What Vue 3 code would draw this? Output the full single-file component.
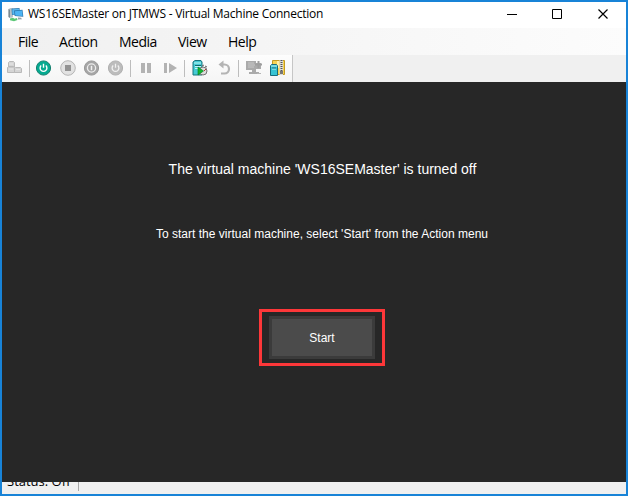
<script setup>
const menus = [
  { label: 'File', cls: 'm-file' },
  { label: 'Action', cls: 'm-action' },
  { label: 'Media', cls: 'm-media' },
  { label: 'View', cls: 'm-view' },
  { label: 'Help', cls: 'm-help' },
]
</script>

<template>
  <div class="window">
    <header class="titlebar">
      <svg class="app-icon" width="16" height="16" viewBox="0 0 16 16">
        <path d="M.5 2l2-1 2.5.5v8.500l-2 1-2.500-1z" fill="#b9c2c7" />
        <path d="M.5 2l1.500.7v8.300l-1.500-1z" fill="#7c8a92" />
        <path d="M3.500 1.500l8-.5.5 6-8 1z" fill="#2f78ac" />
        <path d="M4.300 2.200l6.700-.5.500 5-7 .8z" fill="#57b8f0" />
        <path d="M6 3.500l8.500-.7.8 7-8.600-.8z" fill="#2b74aa" />
        <path d="M6.800 4.200l7.200-.6.600 5.400-7.200-.6z" fill="#4db4f4" />
        <path d="M10 10.500l3 .2 1 1.600-4 .2z" fill="#93a2aa" />
        <path d="M2 11.500l3-.8 1.500 1 2.500-.7.5 2-3.500 1.300-4-1z" fill="#5cc777" />
      </svg>
      <span class="title">WS16SEMaster on JTMWS - Virtual Machine Connection</span>
      <svg class="controls" width="108" height="12" viewBox="0 0 108 12" fill="none" stroke="#000">
        <path d="M0 5.5h10" />
        <path d="M45.5 .5h9v9h-9z" />
        <path d="M91.500 .5l9 9M100.500 .5l-9 9" stroke-width="1.2" />
      </svg>
    </header>

    <nav class="menubar">
      <span v-for="m in menus" :key="m.label" :class="['menu', m.cls]">{{ m.label }}</span>
    </nav>

    <div class="toolbar-row">
      <div class="toolbar">
        <svg class="first" viewBox="0 0 16 16" fill="#d5d5d5" stroke="#b9b9b9">
          <path d="M1.500 2.500l1-1h4l1 1v4.500h-6zM.5 7.500l1-1h5l1 1v5h-7zM7.500 8.500l1-1h5l1 1v4h-7z" />
          <path d="M2 4h4M2 9h4M9 9.500h4" stroke="#e5e5e5" />
        </svg>
        <i class="sep"></i>
        <svg viewBox="0 0 16 16" fill="none">
          <circle cx="7.500" cy="8" r="7.100" fill="#05aa91" stroke="#178271" />
          <path d="M5.200 5.500a3.400 3.400 0 1 0 4.600 0M7.500 3.700v4.100" stroke="#fff" stroke-width="1.4" />
        </svg>
        <svg viewBox="0 0 16 16">
          <circle cx="8" cy="8" r="7.300" fill="#e2e2e2" stroke="#b5b5b5" />
          <path d="M5 5h6v6H5z" fill="#929292" />
        </svg>
        <svg viewBox="0 0 16 16" fill="none">
          <circle cx="7.500" cy="8" r="7.100" fill="#a6a6a6" stroke="#999" />
          <circle cx="7.500" cy="8" r="4.100" stroke="#ededed" stroke-width="1.3" />
          <path d="M7.500 5.800v4.400" stroke="#f2f2f2" stroke-width="1.5" />
        </svg>
        <svg viewBox="0 0 16 16" fill="none">
          <circle cx="7.500" cy="8" r="7.100" fill="#bcbcbc" stroke="#b0b0b0" />
          <path d="M5.200 5.500a3.400 3.400 0 1 0 4.600 0M7.500 3.700v4.100" stroke="#f1f1f1" stroke-width="1.3" />
        </svg>
        <i class="sep"></i>
        <svg viewBox="0 0 16 16" fill="#b3b3b3"><path d="M3 3h4v10H3zM9 3h4v10H9z" /></svg>
        <svg viewBox="0 0 16 16" fill="#b3b3b3"><path d="M2 3h3v10H2zM7 3l8 5-8 5z" /></svg>
        <i class="sep"></i>
        <svg viewBox="0 0 16 16">
          <path d="M1 2l2-1.500h6l1 1.500v13H1z" fill="#45cbd4" stroke="#18747e" />
          <path d="M2 3h7M3 6.500h6M3 8.500h3" stroke="#c3f8f7" />
          <path d="M3 5.500h6" stroke="#17656d" />
          <circle cx="11" cy="11" r="4" fill="#ddd" stroke="#737373" />
          <path d="M10 6l2-1M13 6l2 1" stroke="#666" />
          <path d="M12 11l2-2" stroke="#b23a32" />
          <path d="M6 7v8l5.500-4z" fill="#12b72d" stroke="#087820" stroke-width=".6" />
        </svg>
        <svg viewBox="0 0 16 16">
          <path d="M5 4.500h3.500a4.500 4.500 0 0 1 0 9H5" fill="none" stroke="#b4b4b4" stroke-width="2.200" />
          <path d="M2.500 4.500l5-4v8z" fill="#b4b4b4" />
        </svg>
        <i class="sep"></i>
        <svg viewBox="0 0 16 16">
          <path d="M0 1h10v2h5v6h-5v3h3v2H3v-2h3v-2H0z" fill="#aaa" />
          <path d="M2 3h6M2 5h7M2 7h6" stroke="#c7c7c7" />
          <path d="M12.500 1v7M9 4.500h7" stroke="#9e9e9e" stroke-width="2" />
          <path d="M11 13.500h4" stroke="#b5b5b5" />
        </svg>
        <svg viewBox="0 0 16 16">
          <path d="M2.500.5h12v14h-12z" fill="#f7d453" stroke="#c49b23" />
          <path d="M7 1h2v7H7z" fill="#fff0a9" />
          <path d="M9.500 0h3.500v15h-3.500z" fill="#ddd" />
          <path d="M11.500 0v11" stroke="#555" stroke-width="2" stroke-dasharray="1 1" />
          <path d="M10 11h3v3h-3z" fill="#777" />
          <path d="M.5 6l1-1.500h5l1 1.500v9.500h-7z" fill="#37c4d3" stroke="#176c7c" />
          <path d="M1 6h6M2 9h4" stroke="#b5f4f6" />
          <path d="M2 8h4" stroke="#176c7c" />
        </svg>
      </div>
    </div>

    <main class="screen">
      <h1>The virtual machine 'WS16SEMaster' is turned off</h1>
      <p>To start the virtual machine, select 'Start' from the Action menu</p>
      <div class="highlight"><button>Start</button></div>
    </main>

    <footer class="status"><span>Status: Off</span></footer>
  </div>
</template>

<style>
body { margin: 0; }
</style>

<style scoped>
* { box-sizing: border-box; }
.window {
  width: 628px;
  height: 496px;
  border: 2px solid #1883d7;
  display: flex;
  flex-direction: column;
  background: #f0f0f0;
  color: #000;
  font-family: "Open Sans", "Noto Sans", sans-serif;
  overflow: hidden;
}
.titlebar {
  flex: 0 0 26px;
  display: flex;
  background: #fff;
  padding-left: 6px;
}
.app-icon { margin-top: 5px; flex: none; }
.title {
  flex: none;
  width: 483px;
  padding-left: 4px;
  font-size: 12px;
  line-height: 24px;
  white-space: nowrap;
  letter-spacing: -0.24px;
}
.controls { flex: none; margin-top: 7px; }
.menubar {
  flex: 0 0 27px;
  min-height: 0;
  display: flex;
  padding-left: 16px;
  background: linear-gradient(90deg, #f0f0f0, #fcfcfc);
  font-size: 14px;
  line-height: 28px;
}
.menu { flex: none; white-space: nowrap; letter-spacing: -0.1px; }
.m-file { width: 41px; }
.m-action { width: 60px; letter-spacing: -0.4px; }
.m-media { width: 59px; letter-spacing: -0.5px; }
.m-view { width: 50px; letter-spacing: -0.5px; }
.m-help { letter-spacing: -0.5px; }
.m-file { letter-spacing: -0.5px; }
.toolbar-row { flex: 0 0 27px; display: flex; background: #f0f0f0; }
.toolbar {
  width: 291px;
  display: flex;
  flex: none;
  padding: 5px 0 0 1px;
  background: linear-gradient(#fdfdfd, #f5f5f5);
  border-right: 1px solid #c6c6c6;
}
.toolbar svg { width: 16px; height: 16px; margin: 0 5px 0 3px; flex: none; }
.toolbar svg.first { margin-left: 4px; }
.sep { width: 6px; height: 17px; flex: none; }
.sep::before { content: ""; display: block; width: 1px; height: 17px; margin-left: 1px; background: #bdbdbd; }
.toolbar .first + .sep { width: 5px; }
.screen {
  flex: 0 0 400px;
  display: flex;
  flex-direction: column;
  align-items: center;
  background: #272727;
  color: #fff;
  font-family: "Liberation Sans", sans-serif;
}
h1 {
  margin: 77px 0 0 17px;
  font-size: 14px;
  font-weight: 400;
  line-height: 20px;
  white-space: nowrap;
}
p {
  margin: 46px 0 0 16px;
  font-size: 12px;
  line-height: 18px;
  letter-spacing: 0.01px;
  white-space: nowrap;
}
.highlight {
  width: 126px;
  height: 57px;
  margin: 66px 0 0 16px;
  padding: 4px 7px;
  border: 3px solid #fd3739;
}
button {
  display: block;
  width: 106px;
  height: 43px;
  padding: 0;
  background: #4b4b4b;
  border: 3px solid #3b3b3b;
  color: #fff;
  font: 12px "Liberation Sans", sans-serif;
}
.status {
  flex: 0 0 10px;
  display: flex;
  overflow: hidden;
  font-size: 13px;
}
.status span {
  width: 77px;
  height: 10px;
  margin-top: -1px;
  padding-left: 5px;
  border-right: 1px solid #a8a8a8;
  line-height: 0;
  white-space: nowrap;
}
</style>
